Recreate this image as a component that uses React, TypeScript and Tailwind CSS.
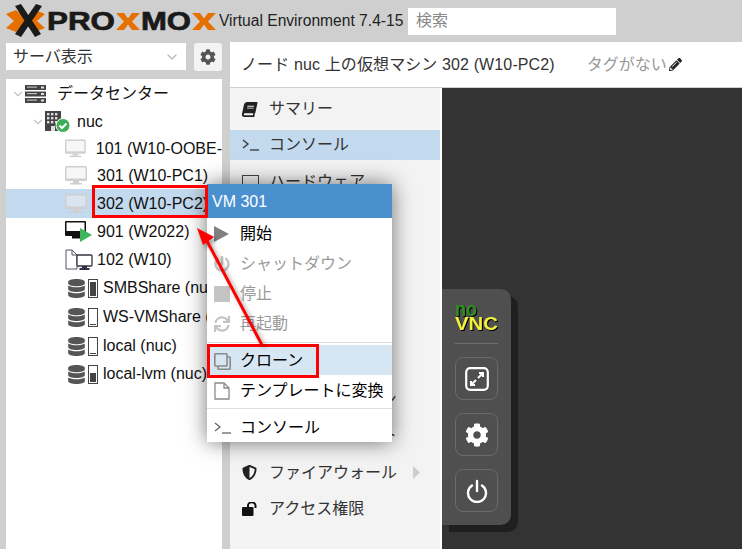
import React from 'react';
import { ChevronDown } from 'lucide-react';
import { FaBook, FaCog, FaPencilAlt, FaPowerOff, FaSync, FaRegClone, FaDatabase, FaShieldAlt } from 'react-icons/fa';

const font = "font-['Liberation_Sans','Noto_Sans_CJK_JP',sans-serif]";

const ProxLogo = () => (
  <svg width="212" height="38" viewBox="0 0 212 38" className="shrink-0">
    <path d="M2 12 L12 8 L24 19 L12 30 L2 26 L10 19 Z" fill="#e57000" />
    <path d="M41 12 L31 8 L19 19 L31 30 L41 26 L33 19 Z" fill="#e57000" />
    <path d="M11 4 L17 2 L37 32 L31 35 Z M32 2 L38 4 L17 35 L11 32 Z" fill="#1a1a1a" />
    <text x="43" y="28" fontFamily="Liberation Sans" fontWeight="700" fontSize="25" textLength="68" lengthAdjust="spacingAndGlyphs" fill="#1a1a1a" stroke="#1a1a1a" strokeWidth="0.7">PRO</text>
    <path d="M112 11 H120 L124 16.5 L128 11 H136 L128 19.5 L136 28 H128 L124 22.5 L120 28 H112 L120 19.5 Z" fill="#e57000" />
    <text x="137" y="28" fontFamily="Liberation Sans" fontWeight="700" fontSize="25" textLength="50" lengthAdjust="spacingAndGlyphs" fill="#1a1a1a" stroke="#1a1a1a" strokeWidth="0.7">MO</text>
    <path d="M188 11 H196 L200 16.5 L204 11 H212 L204 19.5 L212 28 H204 L200 22.5 L196 28 H188 L196 19.5 Z" fill="#e57000" />
  </svg>
);

const Console = ({ color = '#333' }: { color?: string }) => (
  <svg width="18" height="14" viewBox="0 0 18 14" fill="none" stroke={color} strokeWidth="1.3">
    <path d="M1 2 L6 6 L1 10" />
    <path d="M8 12 H17" />
  </svg>
);

const ServerIcon = () => (
  <svg width="21" height="18" viewBox="0 0 21 18">
    {[0, 6.5, 13].map((y) => (
      <g key={y}>
        <rect x="0" y={y} width="21" height="5" fill="#444" />
        <rect x="2" y={y + 1.5} width="10" height="1.2" fill="#bbb" />
        <rect x="16" y={y + 1.5} width="3" height="2" fill="#ddd" />
      </g>
    ))}
  </svg>
);

const NodeIcon = () => (
  <svg width="26" height="22" viewBox="0 0 26 22">
    <rect x="0" y="0" width="16" height="20" fill="#444" />
    {[2, 6, 10].map((x) =>
      [2, 6, 10].map((y) => <rect key={`${x}-${y}`} x={x} y={y} width="2.4" height="2.4" fill="#ddd" />)
    )}
    <rect x="6" y="15" width="4" height="5" fill="#ddd" />
    <circle cx="18" cy="14.5" r="7" fill="#3fae5a" stroke="#fff" strokeWidth="1" />
    <path d="M14.5 14.5 L17 17 L21.5 12.5" fill="none" stroke="#fff" strokeWidth="2" />
  </svg>
);

const DesktopIcon = ({ color, screen }: { color: string; screen: string }) => (
  <svg width="22" height="20" viewBox="0 0 22 20">
    <rect x="0" y="0" width="22" height="15" rx="1.5" fill={color} />
    <rect x="1.5" y="1.5" width="19" height="11" fill={screen} />
    <rect x="8" y="15" width="6" height="2" fill={color} />
    <rect x="5" y="17" width="12" height="1.6" fill={color} />
  </svg>
);

const RunningIcon = () => (
  <svg width="28" height="22" viewBox="0 0 28 22">
    <rect x="0" y="0" width="21" height="15" rx="1" fill="#111" />
    <rect x="1.5" y="1.5" width="18" height="8.5" fill="#fff" />
    <rect x="7" y="15" width="8" height="2.5" fill="#111" />
    <path d="M15 7 L27 14 L15 21 Z" fill="#3fb55a" />
  </svg>
);

const TemplateIcon = () => (
  <svg width="29" height="22" viewBox="0 0 29 22">
    <path d="M1 1 H7 L12 6 V20 H1 Z M7 1 V6 H12" fill="#fff" stroke="#556" strokeWidth="1" />
    <rect x="12" y="6" width="15" height="11" rx="1" fill="#fff" stroke="#334" strokeWidth="1.3" />
    <rect x="17" y="17" width="5" height="2" fill="#334" />
    <rect x="14.5" y="19" width="10" height="2" fill="#334" />
  </svg>
);

const StorageIcon = ({ level }: { level: number }) => (
  <span className="flex items-center gap-[2px] shrink-0">
    <FaDatabase size={19} color="#555" />
    <span className="w-[10px] h-[19px] border border-[#444] flex flex-col justify-end p-px">
      <span className="block bg-[#444] w-full" style={{ height: `${level}%` }} />
    </span>
  </span>
);

const Chevron = () => <ChevronDown size={14} color="#c4c4c4" className="shrink-0" />;

const TreeRow = ({ h, pad, icon, label, selected, gap = 'gap-[10px]' }: { h: string; pad: string; icon: React.ReactNode; label: string; selected?: boolean; gap?: string }) => (
  <div className={`flex items-center whitespace-nowrap overflow-hidden ${h} ${pad} ${gap} ${selected ? 'bg-[#c3daee]' : ''}`}>
    {icon}
    <span>{label}</span>
  </div>
);

const NavRow = ({ icon, label, active, extra = '' }: { icon?: React.ReactNode; label: string; active?: boolean; extra?: string }) => (
  <div className={`h-[30px] flex items-center pl-[12px] whitespace-nowrap text-[#333] ${extra} ${active ? 'bg-[#c3daee]' : ''}`}>
    <span className="w-[27px] flex items-center shrink-0">{icon}</span>
    <span>{label}</span>
  </div>
);

const MenuRow = ({ icon, label, disabled, hover }: { icon: React.ReactNode; label: string; disabled?: boolean; hover?: boolean }) => (
  <div className={`h-[30px] flex items-center pl-[7px] pt-[2px] whitespace-nowrap ${disabled ? 'text-[#9a9a9a]' : 'text-black'} ${hover ? 'bg-[#d6e6f3]' : ''}`}>
    <span className="w-[26px] flex items-center shrink-0">{icon}</span>
    <span>{label}</span>
  </div>
);

const VncButton = ({ children }: { children: React.ReactNode }) => (
  <div className="w-[43px] h-[43px] rounded-[8px] border border-[#6a6a6a] flex items-center justify-center">{children}</div>
);

export default function App() {
  return (
    <div className={`relative w-[742px] h-[549px] overflow-hidden bg-[#cfcfcf] text-[16px] ${font}`}>
      {/* Header */}
      <div className="h-[42px] flex items-center pl-[4px]">
        <ProxLogo />
        <span className="ml-[3px] w-[184px] text-[#222] text-[15.6px] whitespace-nowrap">Virtual Environment 7.4-15</span>
        <div className="ml-[5px] w-[208px] h-[27px] bg-white pl-[8px] flex items-center text-[#888]">検索</div>
      </div>

      <div className="flex h-[507px]">
        {/* Left column */}
        <div className="w-[230px] shrink-0 pl-[6px] pr-[8px]">
          <div className="flex justify-between h-[37px] pt-[1px]">
            <div className="w-[180px] h-[27px] bg-white flex items-center justify-between pl-[7px] pr-[6px] text-[#333]">
              <span>サーバ表示</span>
              <ChevronDown size={16} color="#bbb" />
            </div>
            <div className="w-[28px] h-[28px] bg-[#f3f3f3] rounded-[3px] flex items-center justify-center">
              <FaCog size={16} color="#555" />
            </div>
          </div>
          <div className="h-[470px] bg-white text-[#111] overflow-hidden pt-[1px]">
            <TreeRow h="h-[28px]" pad="pl-[5px]" gap="gap-[0px]" icon={<><Chevron /><span className="w-[32px] shrink-0"><ServerIcon /></span></>} label="データセンター" />
            <TreeRow h="h-[28px]" pad="pl-[25px]" gap="gap-[0px]" icon={<><Chevron /><span className="w-[32px] shrink-0"><NodeIcon /></span></>} label="nuc" />
            <TreeRow h="h-[26px]" pad="pl-[59px]" icon={<DesktopIcon color="#cfcfcf" screen="#f7f7f7" />} label="101 (W10-OOBE-" />
            <TreeRow h="h-[27px]" pad="pl-[59px]" icon={<DesktopIcon color="#cfcfcf" screen="#f7f7f7" />} label="301 (W10-PC1)" />
            <TreeRow h="h-[29px]" pad="pl-[59px]" selected icon={<DesktopIcon color="#cfcfcf" screen="#d8e4ee" />} label="302 (W10-PC2)" />
            <TreeRow h="h-[28px]" pad="pl-[59px]" gap="gap-[4px]" icon={<RunningIcon />} label="901 (W2022)" />
            <TreeRow h="h-[27px]" pad="pl-[59px]" gap="gap-[3px]" icon={<TemplateIcon />} label="102 (W10)" />
            <TreeRow h="h-[30px]" pad="pl-[61px]" gap="gap-[5px]" icon={<StorageIcon level={90} />} label="SMBShare (nuc)" />
            <TreeRow h="h-[28px]" pad="pl-[61px]" gap="gap-[5px]" icon={<StorageIcon level={5} />} label="WS-VMShare (nuc)" />
            <TreeRow h="h-[30px]" pad="pl-[61px]" gap="gap-[5px]" icon={<StorageIcon level={5} />} label="local (nuc)" />
            <TreeRow h="h-[26px]" pad="pl-[61px]" gap="gap-[5px]" icon={<StorageIcon level={55} />} label="local-lvm (nuc)" />
          </div>
        </div>

        {/* Main column */}
        <div className="flex-1 flex flex-col">
          <div className="h-[46px] bg-white border-b border-[#cfcfcf] flex items-center pl-[11px] text-[#333] whitespace-nowrap">
            <span className="tracking-[0.12px]">ノード nuc 上の仮想マシン 302 (W10-PC2)</span>
            <span className="ml-[32px] text-[#999]">タグがない</span>
            <FaPencilAlt size={13} color="#222" className="ml-[2px]" />
          </div>
          <div className="flex-1 flex">
            <div className="w-[212px] bg-[#f3f3f3] border-r-2 border-white pt-[6px] flex flex-col gap-[6.4px]">
              <NavRow icon={<FaBook size={15} color="#222" className="-skew-x-12" />} label="サマリー" />
              <NavRow icon={<Console />} label="コンソール" active />
              <NavRow icon={<span className="block w-[17px] h-[14px] border border-[#444]" />} label="ハードウェア" />
              <NavRow label="Cloud-Init" />
              <NavRow label="オプション" />
              <NavRow label="タスク履歴" />
              <NavRow label="モニタ" />
              <NavRow label="バックアップ" />
              <NavRow label="レプリケーション" />
              <NavRow label="スナップショット" extra="pb-[4px]" />
              <NavRow icon={<FaShieldAlt size={15} color="#222" />} label="ファイアウォール" />
              <NavRow
                icon={
                  <svg width="16" height="14" viewBox="0 0 16 14">
                    <rect x="0" y="5" width="11.5" height="9" rx="1" fill="#111" />
                    <path d="M6 5.5 V3.5 A3.5 3 0 0 1 13.5 3.5 V6" fill="none" stroke="#111" strokeWidth="2" />
                  </svg>
                }
                label="アクセス権限"
              />
            </div>
            <div className="flex-1 bg-[#333]" />
          </div>
        </div>
      </div>

      {/* Firewall submenu arrow */}
      <svg className="absolute left-[413px] top-[466px]" width="8" height="13" viewBox="0 0 8 13"><path d="M0 0 L7 6.5 L0 13 Z" fill="#ccc" /></svg>

      {/* noVNC control bar */}
      <div className="absolute left-[442px] top-[289px] w-[69px] h-[236px] bg-[#4f4f4f] rounded-r-[10px] shadow-[7px_7px_0_#1f1f1f] flex flex-col items-center pt-[8px]">
        <svg width="43" height="36" viewBox="0 -8 43 36" className="[filter:drop-shadow(1px_1px_0_#000)]">
          <text x="0" y="11" fontFamily="Liberation Sans" fontWeight="700" fontSize="20" textLength="22" lengthAdjust="spacingAndGlyphs" fill="#2f8f1f">no</text>
          <text x="0" y="25" fontFamily="Liberation Sans" fontWeight="700" fontSize="18" textLength="43" lengthAdjust="spacingAndGlyphs" fill="#f2f23c">VNC</text>
        </svg>
        <div className="w-[43px] h-px bg-[#6f6f6f] mt-[10px] mb-[13px]" />
        <div className="flex flex-col gap-[13px]">
          <VncButton>
            <svg width="24" height="24" viewBox="0 0 24 24" fill="none" stroke="#fff">
              <rect x="1.2" y="1.2" width="21.6" height="21.6" rx="4" strokeWidth="2.2" />
              <path d="M13 11 L18 6 M14 6 H18 V10 M11 13 L6 18 M6 14 V18 H10" strokeWidth="2" />
            </svg>
          </VncButton>
          <VncButton><FaCog size={24} color="#fff" /></VncButton>
          <VncButton>
            <svg width="22" height="24" viewBox="0 0 22 24" fill="none" stroke="#fff" strokeWidth="2.4" strokeLinecap="round">
              <path d="M11 2 V12" />
              <path d="M6 6.5 A9 9 0 1 0 16 6.5" />
            </svg>
          </VncButton>
        </div>
      </div>

      {/* Context menu */}
      <div className="absolute left-[207px] top-[184px] w-[185px] h-[258px] bg-white shadow-[0_0_20px_rgba(0,0,0,0.55)]">
        <div className="h-[34px] bg-[#4a90cf] text-white flex items-center pl-[5px] pt-[2px]">VM 301</div>
        <MenuRow
          icon={
            <svg width="15" height="16" viewBox="0 0 15 16"><path d="M0 0 L15 8 L0 16 Z" fill="#808080" /></svg>
          }
          label="開始"
        />
        <MenuRow disabled icon={<FaPowerOff size={16} color="#c4c4c4" />} label="シャットダウン" />
        <MenuRow disabled icon={<span className="block w-[16px] h-[16px] bg-[#c4c4c4]" />} label="停止" />
        <MenuRow disabled icon={<FaSync size={16} color="#c4c4c4" />} label="再起動" />
        <div className="h-px bg-[#ddd] mt-[4px] mb-[2px]" />
        <MenuRow hover icon={<FaRegClone size={17} color="#8a8a8a" className="-scale-x-100" />} label="クローン" />
        <MenuRow
          icon={
            <svg width="16" height="18" viewBox="0 0 16 18" fill="none" stroke="#8a8a8a" strokeWidth="1.3">
              <path d="M1 1 H10 L15 6 V17 H1 Z M10 1 V6 H15" />
            </svg>
          }
          label="テンプレートに変換"
        />
        <div className="h-px bg-[#ddd] mt-[3px] mb-[3px]" />
        <MenuRow icon={<Console color="#666" />} label="コンソール" />
      </div>

      {/* Annotations */}
      <div className="absolute left-[92px] top-[185px] w-[116px] h-[33px] border-[3px] border-[#f00]" />
      <div className="absolute left-[207px] top-[344px] w-[112px] h-[34px] border-[3px] border-[#f00]" />
      <svg className="absolute left-0 top-0 pointer-events-none [filter:drop-shadow(3px_3px_2px_rgba(0,0,0,0.35))]" width="742" height="344" viewBox="0 0 742 344">
        <path d="M262 345 L207 241" stroke="#f00" strokeWidth="3" fill="none" />
        <path d="M197 228 L214 237 L203 245 Z" fill="#f00" />
      </svg>
    </div>
  );
}
